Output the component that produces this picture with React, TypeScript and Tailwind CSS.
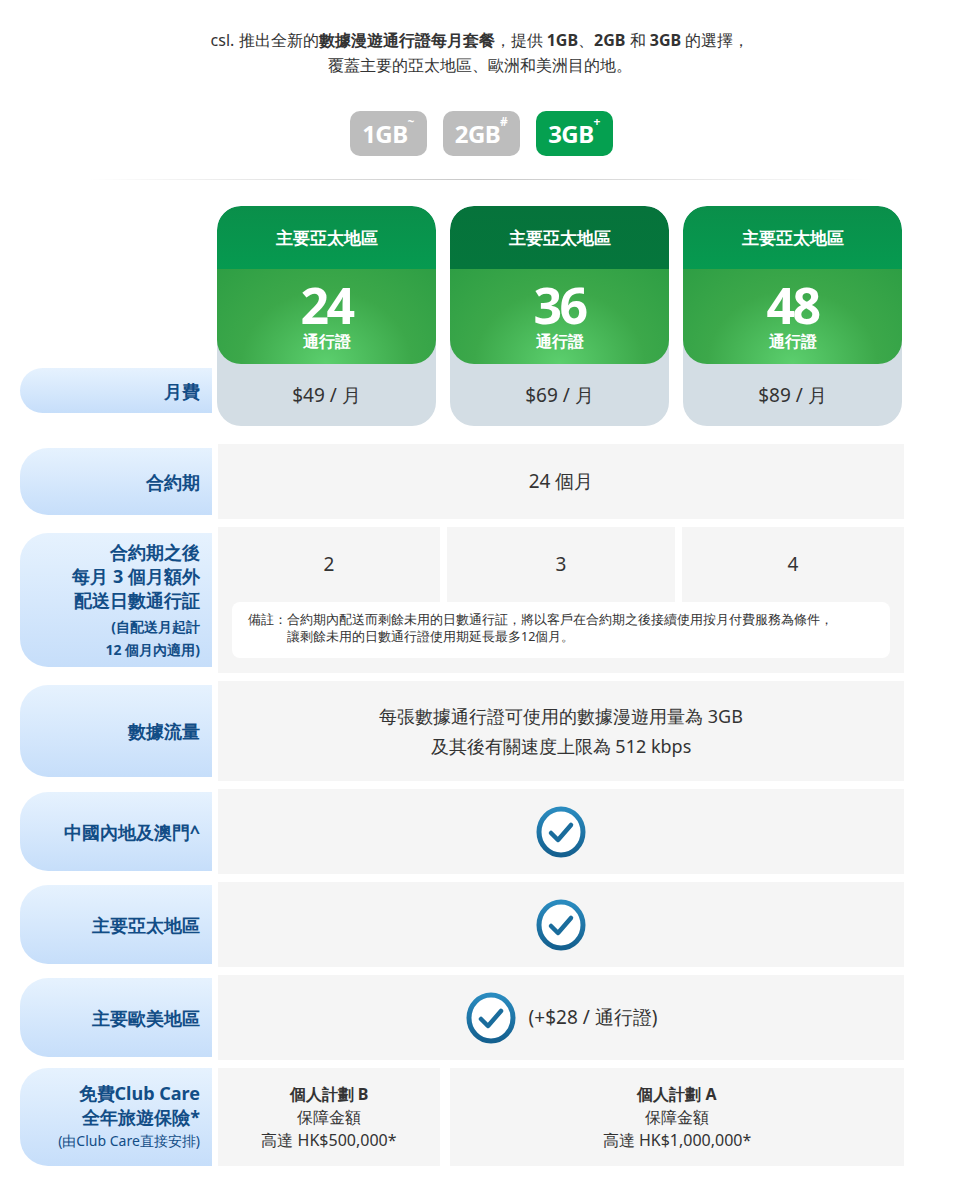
import React from 'react';

const font = "font-['Noto_Sans','Noto_Sans_CJK_TC',sans-serif]";
const arial = "font-['Liberation_Sans','Noto_Sans_CJK_TC',sans-serif]";
const label =
  'w-[192px] shrink-0 rounded-l-[28px] bg-gradient-to-b from-[#e6f2fe] to-[#c6defa] flex flex-col items-end justify-center pr-3 text-right text-[#124d86] font-bold text-[18px] leading-[24px]';

const Check = () => (
  <svg width="52" height="52" viewBox="0 0 52 52">
    <defs>
      <linearGradient id="cg" x1="0" y1="0" x2="0" y2="1">
        <stop offset="0" stopColor="#2a8bbf" />
        <stop offset="1" stopColor="#14608f" />
      </linearGradient>
    </defs>
    <ellipse cx="26" cy="26" rx="22" ry="23" fill="#fff" stroke="url(#cg)" strokeWidth="5" />
    <path d="M16 27 L23 34 L36 19" fill="none" stroke="#1a6c9c" strokeWidth="4.5" strokeLinecap="round" strokeLinejoin="round" />
  </svg>
);

const plans = [
  { n: '24', p: '$49 / 月', head: 'from-[#0a8f4a] to-[#069a50]' },
  { n: '36', p: '$69 / 月', head: 'from-[#06733b] to-[#05763c]' },
  { n: '48', p: '$89 / 月', head: 'from-[#0a8f4a] to-[#069a50]' },
];

export default function App() {
  return (
    <div className={`w-[960px] bg-white pb-8 ${font} text-[#333]`}>
      <div className="pt-[28px] text-center text-[16px] leading-[25px] text-[#333]">
        <p>
          csl. 推出全新的<b>數據漫遊通行證每月套餐</b>，提供 <b>1GB</b>、<b>2GB</b> 和 <b>3GB</b> 的選擇，
        </p>
        <p>覆蓋主要的亞太地區、歐洲和美洲目的地。</p>
      </div>

      <div className="mt-[33px] flex justify-center gap-4 pl-[2px]">
        {[
          ['1GB', '~', 'bg-[#bdbdbd]'],
          ['2GB', '#', 'bg-[#bdbdbd]'],
          ['3GB', '+', 'bg-[#05a050]'],
        ].map(([t, s, c]) => (
          <div
            key={t}
            className={`${c} h-[45px] w-[77px] rounded-[10px] flex items-center justify-center text-white text-[24px] font-bold ${arial} tracking-tight`}
          >
            {t}
            <sup className="text-[12px] -mt-3">{s}</sup>
          </div>
        ))}
      </div>

      <div className="mx-[88px] mt-[23px] h-px bg-gradient-to-r from-transparent via-[#c8c8c8] to-transparent" />

      {/* plan cards */}
      <div className="mt-[26px] flex">
        <div className="w-[217px] shrink-0 flex flex-col justify-end pb-[13px] pl-5">
          <div className={`${label} h-[45px] w-[192px]`}>月費</div>
        </div>
        <div className="flex gap-[14px]">
          {plans.map((p) => (
            <div key={p.n} className="w-[219px] h-[220px] rounded-[24px] bg-[#d3dde4] overflow-hidden flex flex-col">
              <div className="overflow-hidden rounded-[24px]">
                <div className={`h-[63px] bg-gradient-to-b ${p.head} flex items-center justify-center text-white font-bold text-[17px]`}>
                  主要亞太地區
                </div>
                <div className="h-[95px] bg-[radial-gradient(ellipse_at_50%_100%,#5ccf6e_0%,#3ca84a_55%,#2e9e44_100%)] flex flex-col items-center justify-center text-white">
                  <div className={`text-[50px] font-bold leading-[46px] ${arial} tracking-tighter`}>{p.n}</div>
                  <div className="text-[16px] font-bold leading-[22px] mt-[2px]">通行證</div>
                </div>
              </div>
              <div className={`flex-1 flex items-center justify-center text-[19px] text-[#333] ${arial}`}>{p.p}</div>
            </div>
          ))}
        </div>
      </div>

      <div className="mt-[18px] flex flex-col gap-[8px] pl-5 pr-[56px]">
        {/* 合約期 */}
        <div className="flex h-[75px] gap-[6px]">
          <div className={`${label} my-[4px]`}>合約期</div>
          <div className={`flex-1 bg-[#f5f5f5] flex items-center justify-center text-[19px] ${arial}`}>24 個月</div>
        </div>

        {/* extra passes */}
        <div className="flex h-[146px] gap-[6px]">
          <div className={`${label} my-[6px] text-[17px] leading-[21px]`}>
            <span>合約期之後</span>
            <span>每月 3 個月額外</span>
            <span>配送日數通行証</span>
            <span className="text-[14px] leading-[24px] mt-[3px]">(自配送月起計</span>
            <span className="text-[14px] leading-[22px]">12 個月內適用)</span>
          </div>
          <div className="flex-1 bg-[#f5f5f5] flex flex-col">
            <div className={`flex h-[75px] gap-[7px] bg-white ${arial}`}>
              <div className="w-[222px] bg-[#f5f5f5] flex items-center justify-center text-[19px]">2</div>
              <div className="w-[228px] bg-[#f5f5f5] flex items-center justify-center text-[19px]">3</div>
              <div className="flex-1 bg-[#f5f5f5] flex items-center justify-center text-[19px]">4</div>
            </div>
            <div className="mx-[14px] mt-0 h-[56px] rounded-[8px] bg-white px-4 pt-[9px] text-[12.5px] leading-[17px] text-[#333]">
              <p>備註：合約期內配送而剩餘未用的日數通行証，將以客戶在合約期之後接續使用按月付費服務為條件，</p>
              <p className="pl-[39px]">讓剩餘未用的日數通行證使用期延長最多12個月。</p>
            </div>
          </div>
        </div>

        {/* data */}
        <div className="flex h-[100px] gap-[6px]">
          <div className={`${label} my-[4px]`}>數據流量</div>
          <div className="flex-1 bg-[#f5f5f5] flex flex-col items-center justify-center text-[18px] leading-[30px]">
            <p>每張數據通行證可使用的數據漫遊用量為 3GB</p>
            <p>及其後有關速度上限為 512 kbps</p>
          </div>
        </div>

        {['中國內地及澳門^', '主要亞太地區'].map((t) => (
          <div key={t} className="flex h-[85px] gap-[6px]">
            <div className={`${label} my-[3px]`}>{t}</div>
            <div className="flex-1 bg-[#f5f5f5] flex items-center justify-center">
              <Check />
            </div>
          </div>
        ))}

        <div className="flex h-[85px] gap-[6px]">
          <div className={`${label} my-[3px]`}>主要歐美地區</div>
          <div className="flex-1 bg-[#f5f5f5] flex items-center justify-center gap-3 text-[19px]">
            <Check />
            <span>(+$28 / 通行證)</span>
          </div>
        </div>

        {/* club care */}
        <div className="flex h-[98px] gap-[6px]">
          <div className={`${label} text-[17px] leading-[23px]`}>
            <span>免費Club Care</span>
            <span>全年旅遊保險*</span>
            <span className="font-normal text-[14px]">(由Club Care直接安排)</span>
          </div>
          <div className={`flex-1 flex gap-[10px] ${arial}`}>
            <div className="w-[222px] bg-[#f5f5f5] flex flex-col items-center justify-center text-[16px] leading-[23px]">
              <b>個人計劃 B</b>
              <span>保障金額</span>
              <span>高達 HK$500,000*</span>
            </div>
            <div className="flex-1 bg-[#f5f5f5] flex flex-col items-center justify-center text-[16px] leading-[23px]">
              <b>個人計劃 A</b>
              <span>保障金額</span>
              <span>高達 HK$1,000,000*</span>
            </div>
          </div>
        </div>
      </div>
    </div>
  );
}
